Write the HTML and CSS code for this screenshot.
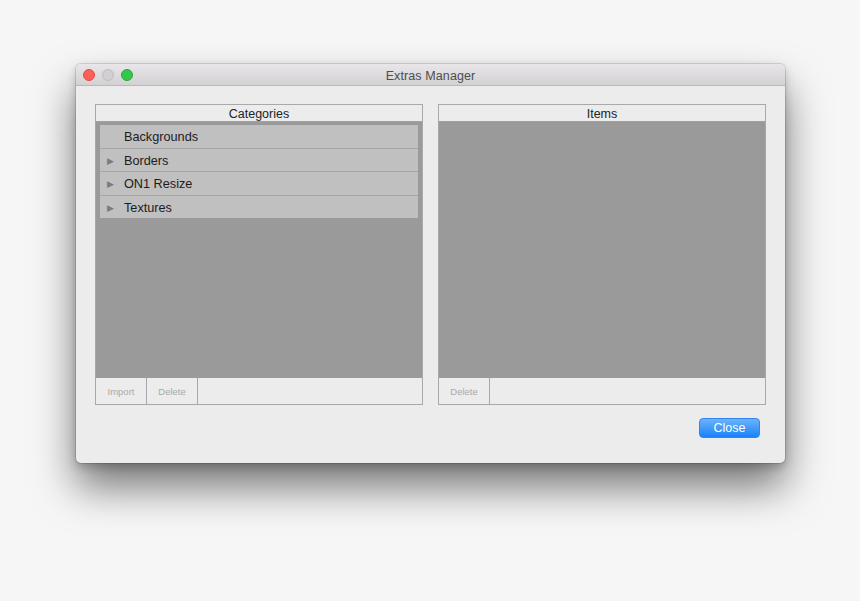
FILE: index.html
```html
<!DOCTYPE html>
<html>
<head>
<meta charset="utf-8">
<link rel="stylesheet" href="styles.css">
</head>
<body>
<div class="window">
  <div class="titlebar">
    <div class="lights">
      <span class="light red"></span>
      <span class="light gray"></span>
      <span class="light green"></span>
    </div>
    <div class="title">Extras Manager</div>
  </div>
  <div class="content">
    <div class="panels">
      <div class="panel">
        <div class="panel-head">Categories</div>
        <div class="panel-body">
          <div class="list">
            <div class="row"><span class="arrow"></span>Backgrounds</div>
            <div class="row"><span class="arrow">&#9654;</span>Borders</div>
            <div class="row"><span class="arrow">&#9654;</span>ON1 Resize</div>
            <div class="row"><span class="arrow">&#9654;</span>Textures</div>
          </div>
        </div>
        <div class="panel-foot">
          <div class="fbtn">Import</div>
          <div class="fbtn">Delete</div>
        </div>
      </div>
      <div class="panel">
        <div class="panel-head">Items</div>
        <div class="panel-body"></div>
        <div class="panel-foot">
          <div class="fbtn">Delete</div>
        </div>
      </div>
    </div>
    <div class="actions">
      <button class="close">Close</button>
    </div>
  </div>
</div>
</body>
</html>
```
FILE: styles.css
```css
html, body {
  margin: 0;
  padding: 0;
  background: #f6f6f6;
  width: 860px;
  height: 601px;
  overflow: hidden;
  font-family: "Liberation Sans", Arial, sans-serif;
}
body {
  padding-top: 64px;
  padding-left: 76px;
  box-sizing: border-box;
}
.window {
  width: 709px;
  height: 399px;
  background: #ececec;
  border-radius: 5px;
  box-shadow: 0 0 0 1px rgba(0,0,0,0.12), 0 24px 42px rgba(0,0,0,0.52), 0 4px 10px rgba(0,0,0,0.2);
  display: flex;
  flex-direction: column;
  overflow: hidden;
}
.titlebar {
  height: 21px;
  background: linear-gradient(#e8e6e8, #d3d1d3);
  border-bottom: 1px solid #b9b9b9;
  display: flex;
  align-items: center;
  position: relative;
}
.lights {
  display: flex;
  gap: 7px;
  padding-left: 7px;
  padding-top: 1px;
}
.light {
  width: 12px;
  height: 12px;
  border-radius: 50%;
  box-sizing: border-box;
}
.red { background: #fc605b; border: 0.5px solid #de4a45; }
.gray { background: #d0d0d0; border: 0.5px solid #bdbdbd; }
.green { background: #34c84a; border: 0.5px solid #27a93a; }
.title {
  position: absolute;
  left: 0;
  right: 0;
  top: 2px;
  line-height: 21px;
  text-align: center;
  font-size: 12.5px;
  letter-spacing: 0.1px;
  color: #4d4d4d;
}
.content {
  padding: 18px 19px 0 19px;
}
.panels {
  display: flex;
  gap: 15px;
}
.panel {
  width: 328px;
  height: 301px;
  border: 1px solid #a9a9a9;
  box-sizing: border-box;
  display: flex;
  flex-direction: column;
  background: #ececec;
}
.panel-head {
  height: 16px;
  line-height: 18px;
  text-align: center;
  font-size: 12.5px;
  color: #222;
  border-bottom: 1px solid #a0a0a0;
  background: #ececec;
}
.panel-body {
  flex: 1;
  background: #9a9a9a;
  padding: 3px 4px;
}
.list {
  display: flex;
  flex-direction: column;
  background: #a6a6a6;
  gap: 1px;
}
.row {
  height: 22.5px;
  box-sizing: border-box;
  background: #c0c0c0;
  display: flex;
  align-items: center;
  font-size: 12.7px;
  color: #1c1c1c;
  padding-top: 2px;
}
.arrow {
  width: 24px;
  padding-left: 7px;
  box-sizing: border-box;
  font-size: 9px;
  color: #7c7c7c;
}
.panel-foot {
  height: 26px;
  display: flex;
  background: #ececec;
}
.fbtn {
  width: 50px;
  border-right: 1px solid #a9a9a9;
  font-size: 9.5px;
  color: #a9a9a9;
  text-align: center;
  line-height: 27px;
}
.actions {
  display: flex;
  justify-content: flex-end;
  padding-top: 13px;
  padding-right: 6px;
}
.close {
  width: 61px;
  height: 20px;
  border-radius: 4px;
  border: 1px solid #2f86f0;
  background: linear-gradient(#6cb3fa, #1a82fb);
  color: #fff;
  font-family: "Liberation Sans", Arial, sans-serif;
  font-size: 12.5px;
  padding: 0;
  line-height: 18px;
}
```
